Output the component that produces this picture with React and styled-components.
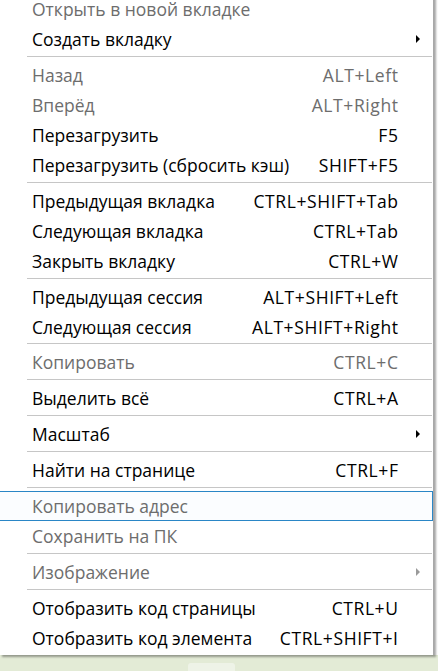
import styled, { createGlobalStyle } from "styled-components";

const GlobalStyle = createGlobalStyle`
  html, body {
    margin: 0;
    padding: 0;
    background: #ffffff;
    overflow: hidden;
  }
`;

const items = [
  { label: "Открыть в новой вкладке", disabled: true },
  { label: "Создать вкладку", arrow: true },
  { sep: true },
  { label: "Назад", shortcut: "ALT+Left", disabled: true },
  { label: "Вперёд", shortcut: "ALT+Right", disabled: true },
  { label: "Перезагрузить", shortcut: "F5" },
  { label: "Перезагрузить (сбросить кэш)", shortcut: "SHIFT+F5" },
  { sep: true },
  { label: "Предыдущая вкладка", shortcut: "CTRL+SHIFT+Tab" },
  { label: "Следующая вкладка", shortcut: "CTRL+Tab" },
  { label: "Закрыть вкладку", shortcut: "CTRL+W" },
  { sep: true },
  { label: "Предыдущая сессия", shortcut: "ALT+SHIFT+Left" },
  { label: "Следующая сессия", shortcut: "ALT+SHIFT+Right" },
  { sep: true },
  { label: "Копировать", shortcut: "CTRL+C", disabled: true },
  { sep: true },
  { label: "Выделить всё", shortcut: "CTRL+A" },
  { sep: true },
  { label: "Масштаб", arrow: true },
  { sep: true },
  { label: "Найти на странице", shortcut: "CTRL+F" },
  { sep: true },
  { label: "Копировать адрес", disabled: true, hover: true },
  { label: "Сохранить на ПК", disabled: true },
  { sep: true },
  { label: "Изображение", disabled: true, arrow: true },
  { sep: true },
  { label: "Отобразить код страницы", shortcut: "CTRL+U" },
  { label: "Отобразить код элемента", shortcut: "CTRL+SHIFT+I" },
];

function App() {
  return (
    <>
      <GlobalStyle />
      <Screen>
        <Main>
          <Menu>
            {items.map((item, i) =>
              item.sep ? (
                <Separator key={i} />
              ) : (
                <Row key={i} $disabled={item.disabled} $hover={item.hover}>
                  <Label>{item.label}</Label>
                  <Shortcut>{item.shortcut}</Shortcut>
                  <ArrowCell>
                    {item.arrow && <Arrow $disabled={item.disabled} />}
                  </ArrowCell>
                </Row>
              )
            )}
          </Menu>
          <PageEdge />
        </Main>
        <Taskbar>
          <TaskButton />
        </Taskbar>
      </Screen>
    </>
  );
}
export default App;

const Screen = styled.div`
  width: 438px;
  height: 671px;
  display: flex;
  flex-direction: column;
  overflow: hidden;
  font-family: "Open Sans", "Noto Sans", sans-serif;
`;

const Main = styled.div`
  display: flex;
  height: 655px;
`;

const Menu = styled.div`
  width: 433px;
  flex-shrink: 0;
  margin-top: -6px;
  padding-bottom: 2px;
  background: #ffffff;
  border-right: 1px solid #a8a8a8;
  box-shadow: 2px 2px 2px rgba(0, 0, 0, 0.35);
  position: relative;
  z-index: 1;
  display: flex;
  flex-direction: column;
`;

const Row = styled.div`
  height: 30px;
  box-sizing: border-box;
  display: grid;
  grid-template-columns: 1fr auto 23px;
  align-items: center;
  padding: 0 11px 0 32px;
  font-size: 17.5px;
  line-height: 18px;
  color: ${(p) => (p.$disabled ? "#6d6d6d" : "#000000")};
  border: 1px solid ${(p) => (p.$hover ? "#2a86c6" : "transparent")};
  border-left: none;
  background: ${(p) => (p.$hover ? "#fbfdff" : "transparent")};
  white-space: nowrap;
`;

const Label = styled.span``;

const Shortcut = styled.span`
  text-align: right;
  letter-spacing: 0.6px;
  margin-right: -0.6px;
`;

const ArrowCell = styled.span`
  display: flex;
  justify-content: flex-end;
  align-items: center;
`;

const Arrow = styled.span`
  width: 0;
  height: 0;
  border-top: 4px solid transparent;
  border-bottom: 4px solid transparent;
  border-left: 4px solid ${(p) => (p.$disabled ? "#9a9a9a" : "#000000")};
  margin-right: 1px;
`;

const Separator = styled.div`
  height: 6px;
  display: flex;
  align-items: flex-start;
  padding: 2px 1px 0 27px;
  box-sizing: border-box;
  &::after {
    content: "";
    flex: 1;
    height: 1px;
    background: #c6c6c6;
  }
`;

const PageEdge = styled.div`
  flex: 1;
  background: #ffffff;
`;

const Taskbar = styled.div`
  flex: 1;
  background: #e3ebd6;
  display: flex;
  align-items: flex-end;
  padding-left: 188px;
`;

const TaskButton = styled.div`
  width: 47px;
  height: 8px;
  background: #eef3e7;
  border-radius: 3px 3px 0 0;
`;
